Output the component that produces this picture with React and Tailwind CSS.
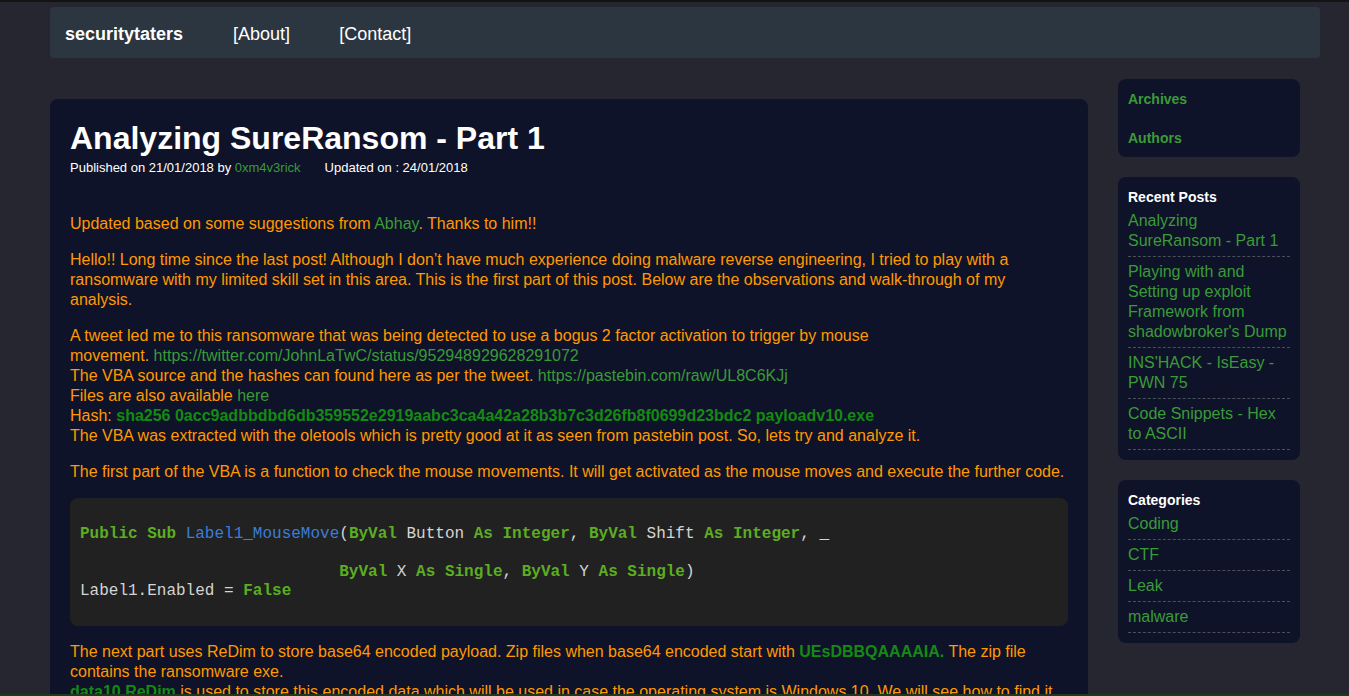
import React from 'react';

const recentPosts = [
  'Analyzing SureRansom - Part 1',
  "Playing with and Setting up exploit Framework from shadowbroker's Dump",
  "INS'HACK - IsEasy - PWN 75",
  'Code Snippets - Hex to ASCII',
];

const categories = ['Coding', 'CTF', 'Leak', 'malware'];

function K({ children }) {
  return <span className="font-bold text-[#5cad22]">{children}</span>;
}

function Link({ children }) {
  return <a className="text-[#3b9a38]">{children}</a>;
}

function SideList({ title, items }) {
  return (
    <div className="bg-[#0f1329] rounded-lg px-[10px] pt-[11px] pb-[10px]">
      <h4 className="text-sm font-bold text-white leading-[18px]">{title}</h4>
      <ul>
        {items.map((it) => (
          <li key={it} className="py-[5px] border-b border-dashed border-[#4b4f5c] text-base leading-[20px] text-[#3b9a38]">
            {it}
          </li>
        ))}
      </ul>
    </div>
  );
}

export default function App() {
  return (
    <div className="min-h-screen bg-[#25262f] font-['Liberation_Sans',Arial,sans-serif]">
      <div className="h-[2px] bg-[#131313]" />
      <div className="ml-[50px] w-[1270px] pt-[5px]">
        <nav className="h-[51px] bg-[#2c3641] rounded flex items-center pl-[15px] pt-[2px] gap-[49px] text-lg text-white">
          <span className="font-bold">securitytaters</span>
          <span className="ml-px">[About]</span>
          <span>[Contact]</span>
        </nav>

        <div className="flex items-start gap-[30px]">
          <main className="w-[1038px] mt-[41px] bg-[#0f1329] rounded-lg px-[20px] pt-[20px] pb-[40px]">
            <h1 className="mt-px text-[32px] leading-[37px] font-bold text-white">Analyzing SureRansom - Part 1</h1>
            <div className="mt-[3px] text-[13px] leading-[16px] text-white">
              Published on 21/01/2018 by <Link>0xm4v3rick</Link>
              <span className="ml-[24px]">Updated on : 24/01/2018</span>
            </div>

            <div className="mt-[38px] text-base leading-[20px] text-[#ff9900]">
              <p className="mb-[16px]">
                Updated based on some suggestions from <Link>Abhay</Link>. Thanks to him!!
              </p>
              <p className="mb-[16px]">
                Hello!! Long time since the last post! Although I don’t have much experience doing malware reverse engineering, I tried to play with a ransomware with my limited skill set in this area. This is the first part of this post. Below are the observations and walk-through of my analysis.
              </p>
              <p className="mb-[16px]">
                A tweet led me to this ransomware that was being detected to use a bogus 2 factor activation to trigger by mouse
                <br />
                movement. <Link>https://twitter.com/JohnLaTwC/status/952948929628291072</Link>
                <br />
                The VBA source and the hashes can found here as per the tweet. <Link>https://pastebin.com/raw/UL8C6KJj</Link>
                <br />
                Files are also available <Link>here</Link>
                <br />
                Hash: <b className="text-[#148a14]">sha256 0acc9adbbdbd6db359552e2919aabc3ca4a42a28b3b7c3d26fb8f0699d23bdc2 payloadv10.exe</b>
                <br />
                The VBA was extracted with the oletools which is pretty good at it as seen from pastebin post. So, lets try and analyze it.
              </p>
              <p className="mb-[16px]">
                The first part of the VBA is a function to check the mouse movements. It will get activated as the mouse moves and execute the further code.
              </p>

              <pre className="mb-[16px] bg-[#212121] rounded-lg px-[10px] pt-[27px] pb-[25px] font-['Liberation_Mono','Courier_New',monospace] text-base leading-[19px] text-[#d4d4d4] whitespace-pre">
                <K>Public</K> <K>Sub</K> <span className="text-[#3b7dd8]">Label1_MouseMove</span>(<K>ByVal</K> Button <K>As</K> <K>Integer</K>, <K>ByVal</K> Shift <K>As</K> <K>Integer</K>, _
                {'\n\n'}
                {'                           '}<K>ByVal</K> X <K>As</K> <K>Single</K>, <K>ByVal</K> Y <K>As</K> <K>Single</K>)
                {'\n'}
                Label1.Enabled = <K>False</K>
              </pre>

              <p className="mb-[16px]">
                The next part uses ReDim to store base64 encoded payload. Zip files when base64 encoded start with <b className="text-[#148a14]">UEsDBBQAAAAIA.</b> The zip file contains the ransomware exe.
                <br />
                <b className="text-[#148a14]">data10 ReDim</b> is used to store this encoded data which will be used in case the operating system is Windows 10. We will see how to find it later.
              </p>
            </div>
          </main>

          <aside className="w-[182px] mt-[21px] flex flex-col gap-[20px]">
            <div className="bg-[#0f1329] rounded-lg px-[10px] pt-[10px] pb-[9px] flex flex-col gap-[19px] text-sm font-bold leading-[20px] text-[#3b9a38]">
              <a>Archives</a>
              <a>Authors</a>
            </div>
            <SideList title="Recent Posts" items={recentPosts} />
            <SideList title="Categories" items={categories} />
          </aside>
        </div>
      </div>
      <div className="fixed left-0 right-0 bottom-0 h-[2px] bg-[#1c3a1c]" />
    </div>
  );
}
